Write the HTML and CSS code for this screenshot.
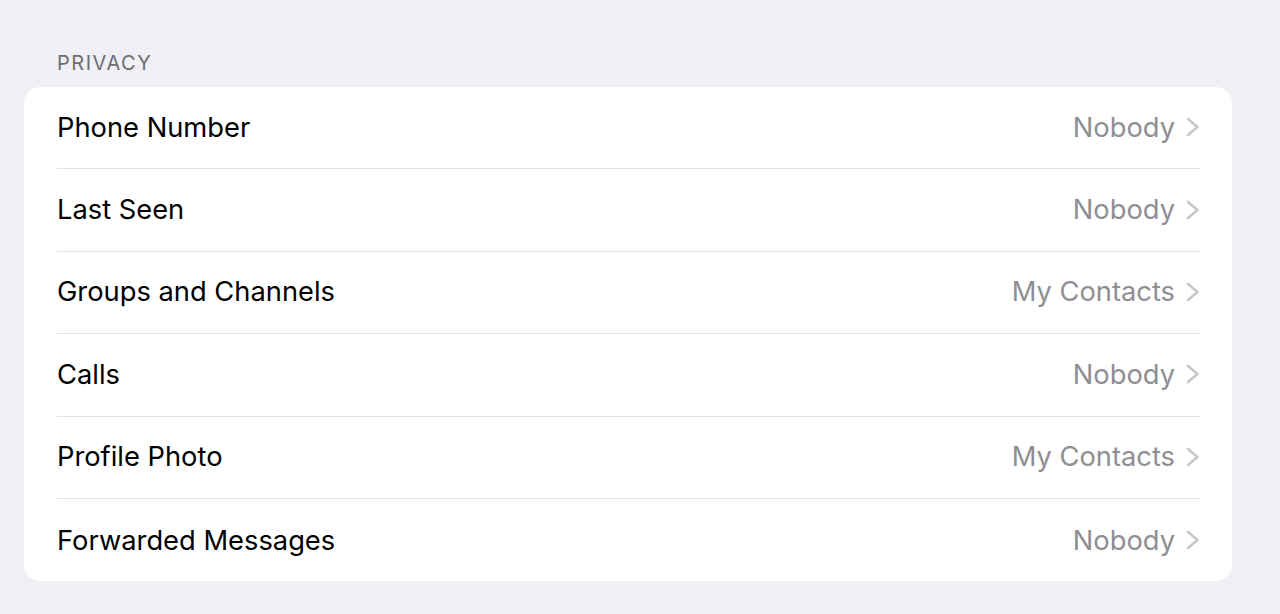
FILE: index.html
```html
<!DOCTYPE html>
<html>
<head>
<meta charset="utf-8">
<link rel="stylesheet" href="styles.css">
</head>
<body>
<div class="page">
  <div class="section-title">PRIVACY</div>
  <div class="card">
    <div class="row"><span class="label">Phone Number</span><span class="value">Nobody</span><svg class="chev" viewBox="0 0 16 22"><path d="M3 3 L12.5 11 L3 19" /></svg></div>
    <div class="row"><span class="label">Last Seen</span><span class="value">Nobody</span><svg class="chev" viewBox="0 0 16 22"><path d="M3 3 L12.5 11 L3 19" /></svg></div>
    <div class="row"><span class="label">Groups and Channels</span><span class="value">My Contacts</span><svg class="chev" viewBox="0 0 16 22"><path d="M3 3 L12.5 11 L3 19" /></svg></div>
    <div class="row"><span class="label">Calls</span><span class="value">Nobody</span><svg class="chev" viewBox="0 0 16 22"><path d="M3 3 L12.5 11 L3 19" /></svg></div>
    <div class="row"><span class="label">Profile Photo</span><span class="value">My Contacts</span><svg class="chev" viewBox="0 0 16 22"><path d="M3 3 L12.5 11 L3 19" /></svg></div>
    <div class="row"><span class="label">Forwarded Messages</span><span class="value">Nobody</span><svg class="chev" viewBox="0 0 16 22"><path d="M3 3 L12.5 11 L3 19" /></svg></div>
  </div>
</div>
</body>
</html>
```
FILE: styles.css
```css
html, body {
  margin: 0;
  padding: 0;
  background: #efeff4;
  font-family: Inter, "Liberation Sans", sans-serif;
}
.page {
  padding: 51px 48px 0 24px;
}
.section-title {
  padding-left: 33px;
  font-size: 20px;
  color: #6d6d72;
  letter-spacing: 1.5px;
  line-height: 24px;
  margin-bottom: 12px;
}
.card {
  background: #fff;
  border-radius: 16px;
  padding-left: 33px;
  padding-right: 31px;
}
.row {
  display: flex;
  align-items: center;
  box-sizing: border-box;
  height: 82.4px;
  padding-bottom: 1px;
  border-bottom: 1px solid #e3e3e6;
}
.row:last-child {
  border-bottom: none;
  padding-bottom: 0;
}
.label {
  flex: 1;
  font-size: 27.3px;
  color: #000;
}
.value {
  font-size: 27.3px;
  color: #8e8e93;
  margin-right: 10px;
}
.chev {
  width: 16px;
  height: 22px;
  fill: none;
  stroke: #c7c7cc;
  stroke-width: 2.6;
  stroke-linecap: round;
  stroke-linejoin: round;
}
```
